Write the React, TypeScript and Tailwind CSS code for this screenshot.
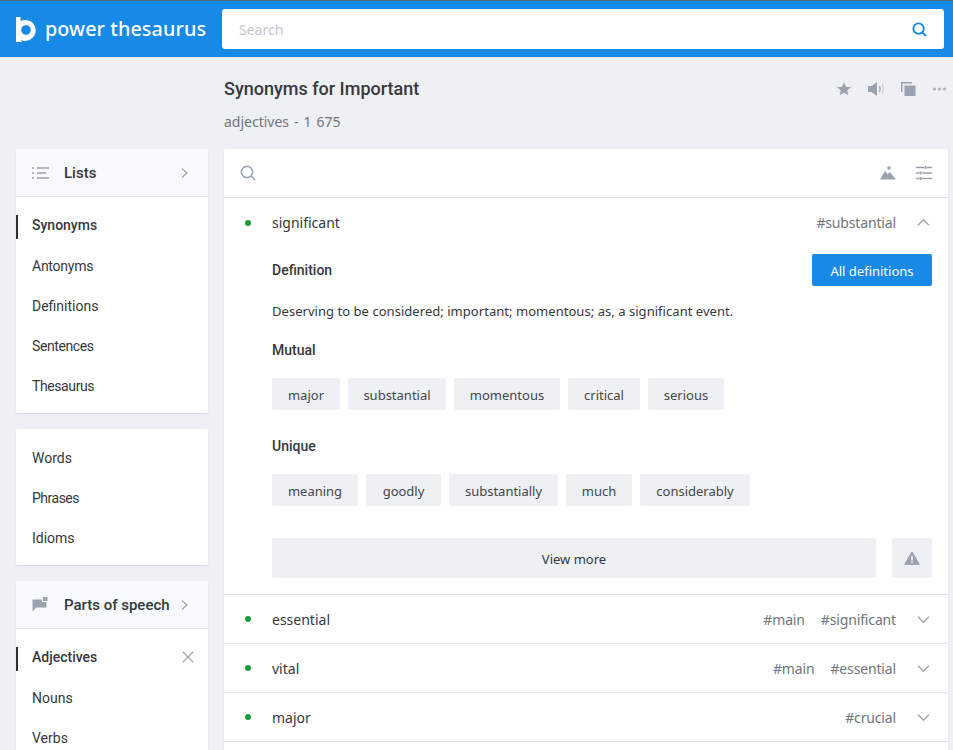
import React from "react";

const G = "#9ca3b0";

function Chev({ dir = "right", size = 12 }: { dir?: "right" | "up" | "down"; size?: number }) {
  const d = dir === "right" ? "M4 1.5 L9 6 L4 10.5" : dir === "up" ? "M1 8.5 L6 3.5 L11 8.5" : "M1 3.5 L6 8.5 L11 3.5";
  return (
    <svg width={size} height={size} viewBox="0 0 12 12" fill="none" stroke={G} strokeWidth="1.2">
      <path d={d} />
    </svg>
  );
}

function Mag({ color, w = 1.6, size = 16 }: { color: string; w?: number; size?: number }) {
  return (
    <svg width={size} height={size} viewBox="0 0 16 16" fill="none" stroke={color} strokeWidth={w}>
      <circle cx="7" cy="7" r="5.6" />
      <path d="M11 11 L15 15" />
    </svg>
  );
}

function SideItem({
  label,
  active,
  x,
  track = "",
  className = "",
}: {
  label: string;
  active?: boolean;
  x?: boolean;
  track?: string;
  className?: string;
}) {
  return (
    <div className={`relative flex h-10 items-center justify-between pl-4 pr-[14px] ${className}`}>
      {active && <div className="absolute left-0 top-[10px] h-6 w-[2px] bg-[#2f3033]" />}
      <span className={`text-[14px] text-[#36383d] ${active ? "font-medium" : ""} ${track}`}>{label}</span>
      {x && (
        <svg width="12" height="12" viewBox="0 0 12 12" stroke={G} strokeWidth="1.2">
          <path d="M1 1 L11 11 M11 1 L1 11" />
        </svg>
      )}
    </div>
  );
}

function SideHead({ icon, label }: { icon: React.ReactNode; label: string }) {
  return (
    <div className="flex h-[48px] items-center border-b border-[#e1e3ea] bg-[#f8f9fc] pl-4 pr-[18px]">
      <span className="flex w-8 items-center">{icon}</span>
      <span className="flex-1 pt-[2px] text-[15px] font-medium text-[#36383d]">{label}</span>
      <Chev />
    </div>
  );
}

function Tag({ t, w }: { t: string; w: string }) {
  return (
    <span className={`flex h-8 items-center justify-center rounded-[2px] bg-[#eff0f4] pt-[3px] font-['Noto_Sans'] text-[13px] text-[#44464b] ${w}`}>
      {t}
    </span>
  );
}

function Dot() {
  return <span className="mr-[21px] ml-[21px] h-[6px] w-[6px] rounded-full bg-[#16a037]" />;
}

function Row({ word, tags }: { word: string; tags: string[] }) {
  return (
    <div className="flex h-[49px] items-center border-t border-[#e1e3ea] pr-[18px]">
      <Dot />
      <span className="flex-1 font-['Noto_Sans'] text-[14px] text-[#36383d]">{word}</span>
      {tags.map((t) => (
        <span key={t} className="ml-4 font-['Noto_Sans'] text-[14px] tracking-[-0.15px] text-[#6f7580]">
          {t}
        </span>
      ))}
      <span className="ml-[21px] flex">
        <Chev dir="down" size={13} />
      </span>
    </div>
  );
}

export default function App() {
  return (
    <div className="h-[750px] w-[953px] overflow-hidden bg-[#eff0f4] font-['Roboto',sans-serif]">
      <div className="h-px bg-[#4d6a70]" />
      <header className="flex h-[56px] items-center bg-[#178ae8] pl-4 pr-[9px]">
        <svg width="21" height="25" viewBox="0 0 21 25" className="shrink-0">
          <path d="M0 0 H4.500 V4 A10.500 10.500 0 1 1 5 23 L6 25 H0 Z" fill="#fff" />
          <circle cx="10" cy="13" r="4.800" fill="#178ae8" />
          <path d="M3.300 14 A7.500 7.500 0 0 0 7 22" fill="none" stroke="#cfe4f8" strokeWidth="0.800" />
        </svg>
        <span className="ml-2 w-[161px] shrink-0 font-['Noto_Sans'] text-[19.75px] font-medium leading-none tracking-[0.1px] text-white whitespace-nowrap">
          power thesaurus
        </span>
        <div className="ml-[16px] flex h-10 flex-1 items-center justify-between rounded-[3px] bg-white pl-[17px] pr-[17px]">
          <span className="font-['Noto_Sans'] text-[14px] text-[#c3c6ce]">Search</span>
          <Mag color="#178ae8" w={2} size={15} />
        </div>
      </header>

      <div className="flex gap-4 pl-4 pr-[5px]">
        <aside className="w-[192px] shrink-0 pt-[92px]">
          <div className="rounded-[2px] bg-white pb-[7px] shadow-[0_1px_2px_rgba(0,0,0,0.1)]">
            <SideHead
              label="Lists"
              icon={
                <svg width="17" height="12" viewBox="0 0 17 12" fill="none" stroke={G} strokeWidth="1.4">
                  <path d="M0 1 H2 M0 6 H2 M0 11 H2 M5 1 H17 M5 6 H14 M5 11 H17" />
                </svg>
              }
            />
            <div className="pt-2">
              <SideItem label="Synonyms" active className="mb-px" />
              <SideItem label="Antonyms" track="tracking-[-0.25px]" />
              <SideItem label="Definitions" />
              <SideItem label="Sentences" track="tracking-[-0.4px]" />
              <SideItem label="Thesaurus" track="tracking-[-0.4px]" />
            </div>
          </div>
          <div className="mt-4 rounded-[2px] bg-white pb-[7px] pt-[9px] shadow-[0_1px_2px_rgba(0,0,0,0.1)]">
            <SideItem label="Words" />
            <SideItem label="Phrases" track="tracking-[-0.5px]" />
            <SideItem label="Idioms" />
          </div>
          <div className="mt-4 rounded-[2px] bg-white shadow-[0_1px_2px_rgba(0,0,0,0.1)]">
            <SideHead
              label="Parts of speech"
              icon={
                <svg width="16" height="15" viewBox="0 0 16 15" fill={G}>
                  <path d="M0.500 2.500 H10 V5 H14.500 V10.500 H4 L0.500 14.500 Z" />
                  <rect x="10.800" y="0" width="4.700" height="4" />
                </svg>
              }
            />
            <div className="pt-2">
              <SideItem label="Adjectives" active x className="mb-px" />
              <SideItem label="Nouns" />
              <SideItem label="Verbs" />
            </div>
          </div>
        </aside>

        <main className="flex-1">
          <div className="flex h-[92px] items-start justify-between">
            <div>
              <h1 className="mt-[21px] text-[18px] font-medium leading-[22px] text-[#36383d]">Synonyms for Important</h1>
              <p className="mt-[12px] font-['Noto_Sans'] text-[14px] leading-[20px] text-[#6f7580] [word-spacing:1.3px]">
                adjectives - 1 675
              </p>
            </div>
            <div className="mt-[25px] flex items-center gap-[17px] pr-[2px]">
              <svg width="14" height="14" viewBox="0 0 24 24" fill={G}>
                <path d="M12 0.500l3.500 7.500 8.300.9-6.200 5.600 1.800 8.100L12 18.500l-7.400 4.100 1.800-8.100L0.200 8.900 8.500 8z" />
              </svg>
              <svg width="16" height="14" viewBox="0 0 16 14" fill="none">
                <path d="M0 4 H3.500 L9 0 V14 L3.500 10 H0 Z" fill={G} />
                <path d="M11.500 4 Q12.800 7 11.500 10" stroke={G} strokeWidth="1.300" />
                <path d="M14.300 2 Q16.300 7 14.300 12" stroke="#c3c8d1" strokeWidth="1" />
              </svg>
              <svg width="15" height="14" viewBox="0 0 15 14" fill={G}>
                <path d="M0 10 V0 H11 V1.500 H1.500 V10 Z" />
                <rect x="3.500" y="3.500" width="11" height="10.500" />
              </svg>
              <svg width="13" height="14" viewBox="0 0 13 14" fill="#a9afbb">
                <circle cx="1.500" cy="7" r="1.500" />
                <circle cx="6.500" cy="7" r="1.500" />
                <circle cx="11.500" cy="7" r="1.500" />
              </svg>
            </div>
          </div>

          <div className="rounded-[2px] bg-white shadow-[0_1px_2px_rgba(0,0,0,0.1)]">
            <div className="flex h-[48px] items-center justify-between pl-4 pr-4">
              <Mag color={G} w={1.6} />
              <div className="flex items-center gap-5">
                <svg width="16" height="14" viewBox="0 0 16 14" fill={G}>
                  <path d="M0 13.500 L5 5 L7.500 8 L10 6.300 L16 13.500 Z" />
                  <circle cx="9" cy="2" r="1.800" />
                </svg>
                <svg width="16" height="14" viewBox="0 0 16 14" fill="none" stroke={G} strokeWidth="1.600">
                  <path d="M0 1.500 H8 M11 1.500 H16 M0 7 H3 M6 7 H16 M0 12.500 H3 M6 12.500 H16" />
                  <path d="M9.500 0 V3 M4.500 5.500 V8.500 M4.500 11 V14" strokeWidth="2" />
                </svg>
              </div>
            </div>

            <div className="border-t border-[#e1e3ea] pb-4">
              <div className="flex h-[49px] items-center pr-[18px]">
                <Dot />
                <span className="flex-1 font-['Noto_Sans'] text-[14px] text-[#36383d]">significant</span>
                <span className="font-['Noto_Sans'] text-[14px] tracking-[-0.15px] text-[#6f7580]">#substantial</span>
                <span className="ml-[21px] flex">
                  <Chev dir="up" size={13} />
                </span>
              </div>
              <div className="pl-[48px] pr-4">
                <div className="mt-[7px] flex h-8 items-center justify-between">
                  <span className="text-[14px] font-medium text-[#36383d]">Definition</span>
                  <span className="flex h-8 w-[120px] items-center justify-center rounded-[2px] bg-[#178ae8] pt-[3px] font-['Noto_Sans'] text-[13px] text-white">
                    All definitions
                  </span>
                </div>
                <p className="mt-4 font-['Noto_Sans'] text-[13px] leading-[18px] tracking-[0.04px] text-[#36383d]">
                  Deserving to be considered; important; momentous; as, a significant event.
                </p>
                <h3 className="mt-[21px] text-[14px] font-medium leading-[18px] text-[#36383d]">Mutual</h3>
                <div className="mt-[19px] flex gap-2">
                  <Tag t="major" w="w-[68px]" />
                  <Tag t="substantial" w="w-[98px]" />
                  <Tag t="momentous" w="w-[106px]" />
                  <Tag t="critical" w="w-[72px]" />
                  <Tag t="serious" w="w-[76px]" />
                </div>
                <h3 className="mt-[27px] text-[14px] font-medium leading-[18px] text-[#36383d]">Unique</h3>
                <div className="mt-[19px] flex gap-2">
                  <Tag t="meaning" w="w-[86px]" />
                  <Tag t="goodly" w="w-[75px]" />
                  <Tag t="substantially" w="w-[109px]" />
                  <Tag t="much" w="w-[66px]" />
                  <Tag t="considerably" w="w-[110px]" />
                </div>
                <div className="mt-8 flex gap-4">
                  <div className="flex h-10 flex-1 items-center justify-center rounded-[2px] bg-[#eff0f4] pt-[3px] font-['Noto_Sans'] text-[13px] text-[#36383d]">
                    View more
                  </div>
                  <div className="flex h-10 w-10 items-center justify-center rounded-[2px] bg-[#eff0f4]">
                    <svg width="16" height="14" viewBox="0 0 16 14">
                      <path d="M8 0.800 L15.300 13.300 H0.700 Z" fill={G} stroke={G} strokeLinejoin="round" />
                      <rect x="7.200" y="5" width="1.600" height="4.500" fill="#eff0f4" />
                      <rect x="7.200" y="10.500" width="1.600" height="1.600" fill="#eff0f4" />
                    </svg>
                  </div>
                </div>
              </div>
            </div>

            <Row word="essential" tags={["#main", "#significant"]} />
            <Row word="vital" tags={["#main", "#essential"]} />
            <Row word="major" tags={["#crucial"]} />
            <div className="h-[49px] border-t border-[#e1e3ea]" />
          </div>
        </main>
      </div>
    </div>
  );
}
